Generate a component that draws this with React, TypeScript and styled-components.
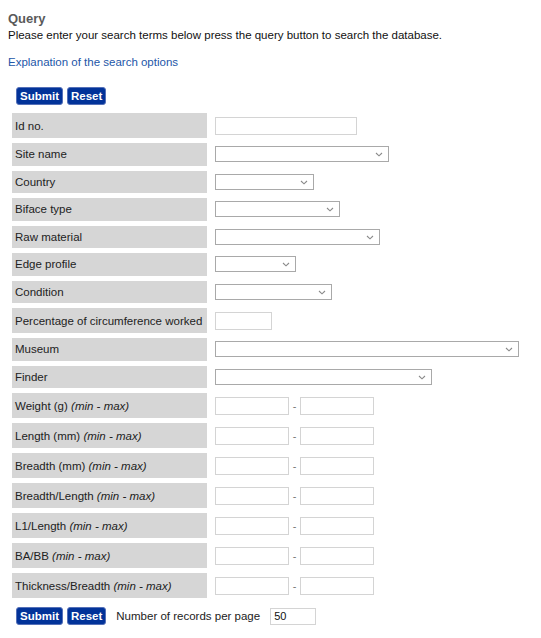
import React from 'react';
import styled, { createGlobalStyle } from 'styled-components';

const GlobalStyle = createGlobalStyle`
	body {
		margin: 8px;
		font-family: 'Liberation Sans', Arial, sans-serif;
		color: #222;
		background: #fff;
	}
`;

type Field =
	| { kind: 'text'; label: string; width: number }
	| { kind: 'select'; label: string; width: number }
	| { kind: 'range'; label: string; hint: string };

const fields: Field[] = [
	{ kind: 'text', label: 'Id no.', width: 142 },
	{ kind: 'select', label: 'Site name', width: 174 },
	{ kind: 'select', label: 'Country', width: 99 },
	{ kind: 'select', label: 'Biface type', width: 125 },
	{ kind: 'select', label: 'Raw material', width: 165 },
	{ kind: 'select', label: 'Edge profile', width: 81 },
	{ kind: 'select', label: 'Condition', width: 117 },
	{ kind: 'text', label: 'Percentage of circumference worked', width: 57 },
	{ kind: 'select', label: 'Museum', width: 304 },
	{ kind: 'select', label: 'Finder', width: 217 },
	{ kind: 'range', label: 'Weight (g)', hint: '(min - max)' },
	{ kind: 'range', label: 'Length (mm)', hint: '(min - max)' },
	{ kind: 'range', label: 'Breadth (mm)', hint: '(min - max)' },
	{ kind: 'range', label: 'Breadth/Length', hint: '(min - max)' },
	{ kind: 'range', label: 'L1/Length', hint: '(min - max)' },
	{ kind: 'range', label: 'BA/BB', hint: '(min - max)' },
	{ kind: 'range', label: 'Thickness/Breadth', hint: '(min - max)' },
];

const Chevron = () => (
	<ChevronIcon width="8" height="5" viewBox="0 0 8 5">
		<path d="M1 1 L4 3.8 L7 1" fill="none" stroke="#8a8a8a" strokeWidth="1.1" />
	</ChevronIcon>
);

const Buttons = () => (
	<>
		<Button type="button">Submit</Button>
		<Button type="button">Reset</Button>
	</>
);

export default function App() {
	return (
		<>
			<GlobalStyle />
			<Title>Query</Title>
			<Intro>Please enter your search terms below press the query button to search the database.</Intro>
			<HelpLink href="#">Explanation of the search options</HelpLink>
			<ButtonBar>
				<Buttons />
			</ButtonBar>
			<Form>
				{fields.map((f) => (
					<React.Fragment key={f.label}>
						<Label $tall={f.kind !== 'select'}>
							{f.label}
							{f.kind === 'range' && <Hint> {f.hint}</Hint>}
						</Label>
						<Control>
							{f.kind === 'text' && <TextInput $width={f.width} />}
							{f.kind === 'select' && (
								<SelectWrap>
									<Select $width={f.width}>
										<option></option>
									</Select>
									<Chevron />
								</SelectWrap>
							)}
							{f.kind === 'range' && (
								<>
									<TextInput $width={74} />
									<Dash>-</Dash>
									<TextInput $width={74} />
								</>
							)}
						</Control>
					</React.Fragment>
				))}
			</Form>
			<Footer>
				<Buttons />
				<FooterText>Number of records per page</FooterText>
				<TextInput $width={46} defaultValue="50" />
			</Footer>
		</>
	);
}

const Title = styled.div`
	margin-top: 3px;
	font-size: 13px;
	line-height: 16px;
	font-weight: bold;
	color: #5a5a5a;
`;

const Intro = styled.div`
	margin-top: 1px;
	font-size: 11.5px;
	line-height: 14px;
	color: #111;
`;

const HelpLink = styled.a`
	display: block;
	margin-top: 13px;
	font-size: 11.5px;
	line-height: 14px;
	color: #2356a8;
	text-decoration: none;
`;

const ButtonBar = styled.div`
	display: flex;
	gap: 4px;
	margin-top: 18px;
	padding-left: 8px;
`;

const Button = styled.button`
	height: 18px;
	padding: 0 3px;
	border: 1px solid #5570b8;
	border-radius: 3px;
	background: #023399;
	color: #fff;
	font-family: 'Liberation Sans', Arial, sans-serif;
	font-size: 11.5px;
	font-weight: bold;
	line-height: 16px;
	cursor: pointer;
`;

const Form = styled.div`
	display: grid;
	grid-template-columns: 195px 1fr;
	column-gap: 8px;
	row-gap: 5px;
	margin-top: 8px;
	padding-left: 4px;
`;

const Label = styled.div<{ $tall: boolean }>`
	display: flex;
	align-items: center;
	height: ${(p) => (p.$tall ? '25px' : '22.5px')};
	padding-left: 3px;
	background: #d6d6d6;
	font-size: 11.5px;
	color: #222;
	white-space: nowrap;
`;

const Hint = styled.i`
	white-space: pre;
`;

const Control = styled.div`
	display: flex;
	align-items: center;
`;

const TextInput = styled.input<{ $width: number }>`
	box-sizing: border-box;
	width: ${(p) => p.$width}px;
	height: 18px;
	margin: 0;
	padding: 0 3px;
	border: 1px solid #d4d4d4;
	font-family: 'Liberation Sans', Arial, sans-serif;
	font-size: 11px;
	color: #111;
	outline: none;
`;

const SelectWrap = styled.div`
	position: relative;
	display: inline-flex;
`;

const Select = styled.select<{ $width: number }>`
	box-sizing: border-box;
	appearance: none;
	width: ${(p) => p.$width}px;
	height: 16px;
	margin: 0;
	padding: 0 3px;
	border: 1px solid #a9a9a9;
	border-radius: 0;
	background: #fff;
	font-size: 11px;
	outline: none;
`;

const ChevronIcon = styled.svg`
	position: absolute;
	right: 6px;
	top: 6px;
	pointer-events: none;
`;

const Dash = styled.span`
	width: 11px;
	text-align: center;
	font-size: 11px;
	color: #777;
`;

const Footer = styled.div`
	display: flex;
	align-items: center;
	gap: 4px;
	margin-top: 9px;
	padding-left: 8px;

	input {
		height: 17px;
		margin-left: 6px;
	}
`;

const FooterText = styled.span`
	margin-left: 6px;
	font-size: 11.5px;
	color: #222;
`;
